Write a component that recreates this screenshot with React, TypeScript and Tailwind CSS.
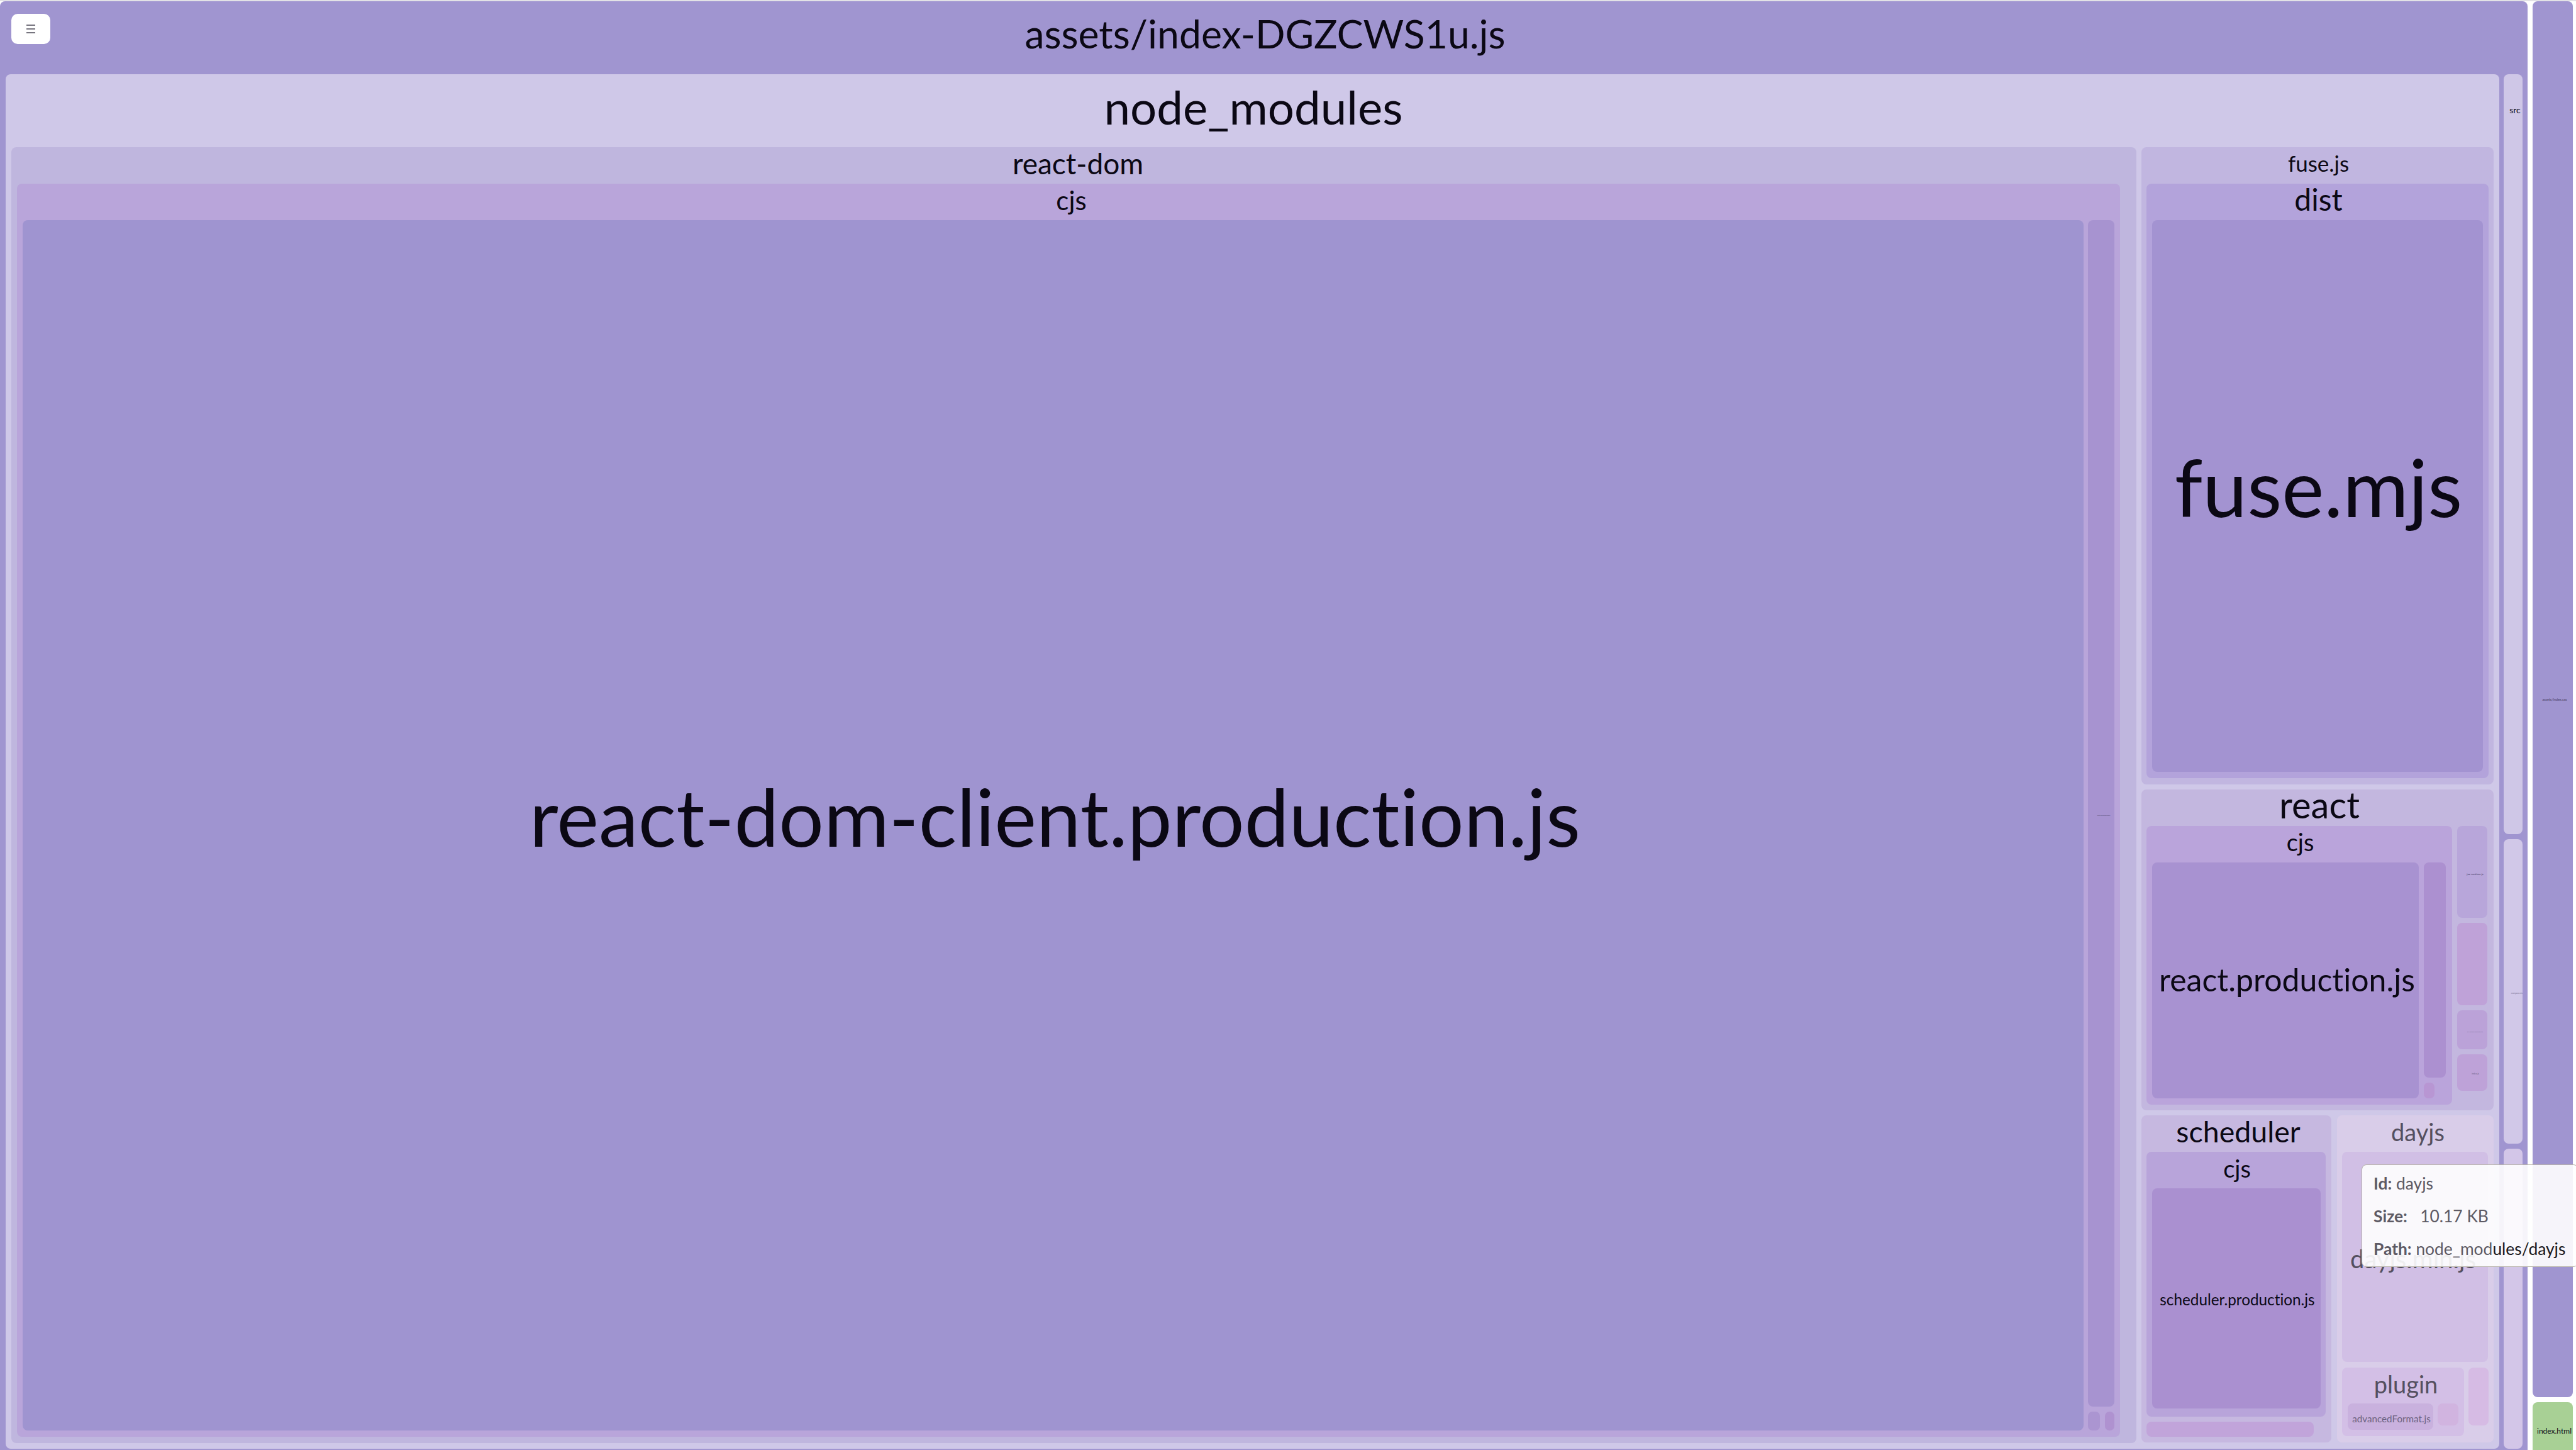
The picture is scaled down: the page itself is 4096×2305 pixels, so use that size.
const font = "font-['Lato','Liberation_Sans',sans-serif] [font-variant-ligatures:none]";

function Label({ size, children }: { size: string; children: React.ReactNode }) {
  return <span className={`whitespace-nowrap leading-none ${size}`}>{children}</span>;
}

export default function App() {
  return (
    <div className={`relative flex h-[2305px] w-[4096px] overflow-hidden border-t-2 border-[#e3e3e6] bg-white text-[#0b0814] ${font}`}>
      {/* asset: index chunk */}
      <div className="flex h-[2330px] w-[4019px] shrink-0 flex-col rounded-[8px] bg-[#a095d0]">
        <div className="relative flex h-[116px] shrink-0 items-center justify-center pb-[13px] pl-[4px]">
          <button className="absolute left-[18px] top-[20px] flex h-[48px] w-[62px] flex-col items-center justify-center gap-[4px] rounded-[10px] bg-white">
            <span className="h-[2px] w-[14px] bg-[#77757f]" />
            <span className="h-[2px] w-[14px] bg-[#77757f]" />
            <span className="h-[2px] w-[14px] bg-[#77757f]" />
          </button>
          <Label size="text-[62.5px]">assets/index-DGZCWS1u.js</Label>
        </div>

        <div className="flex h-[2185px] shrink-0 gap-[7px] pl-[9px]">
          {/* node_modules */}
          <div className="flex w-[3965px] shrink-0 flex-col rounded-[8px] bg-[#cfc8e8] px-[9px] pb-[9px]">
            <div className="flex h-[116px] shrink-0 items-center justify-center pb-[13px] pl-[3px]">
              <Label size="text-[74.5px]">node_modules</Label>
            </div>
            <div className="flex min-h-0 flex-1 gap-[8px]">
              {/* react-dom */}
              <div className="flex w-[3379px] shrink-0 flex-col rounded-[8px] bg-[#bfb6de] pl-[9px] pb-[10px]">
                <div className="flex h-[58px] shrink-0 items-center justify-center pb-[7px] pl-[4px]">
                  <Label size="text-[46px]">react-dom</Label>
                </div>
                <div className="flex min-h-0 w-[3344px] flex-1 flex-col rounded-[8px] bg-[#b9a5da] pl-[9px] pb-[10px]">
                  <div className="flex h-[58px] shrink-0 items-center justify-center pb-[6px]">
                    <Label size="text-[42px]">cjs</Label>
                  </div>
                  <div className="flex min-h-0 flex-1 gap-[7px]">
                    <div className="flex w-[3277px] shrink-0 items-center justify-center rounded-[8px] bg-[#9f94d0] pb-[30px] pl-[6px]">
                      <Label size="text-[126.4px]">react-dom-client.production.js</Label>
                    </div>
                    <div className="flex w-[42px] shrink-0 flex-col gap-[8px]">
                      <div className="flex min-h-0 flex-1 items-center justify-center rounded-[8px] bg-[#a793d0] pl-[8px] pt-[6px]">
                        <Label size="text-[2px] text-[#4b4468]">react-dom.production.js</Label>
                      </div>
                      <div className="flex h-[30px] shrink-0 gap-[8px]">
                        <div className="w-[19px] rounded-[7px] bg-[#ab95d1]" />
                        <div className="w-[15px] rounded-[7px] bg-[#af92d0]" />
                      </div>
                    </div>
                  </div>
                </div>
              </div>

              <div className="flex w-[560px] shrink-0 flex-col gap-[8px]">
                {/* fuse.js */}
                <div className="flex h-[1013px] shrink-0 flex-col rounded-[8px] bg-[#c1b6e0] px-[8px] pb-[10px]">
                  <div className="flex h-[58px] shrink-0 items-center justify-center pb-[7px] pl-[3px]">
                    <Label size="text-[35px]">fuse.js</Label>
                  </div>
                  <div className="flex min-h-0 flex-1 flex-col rounded-[8px] bg-[#b3a3db] px-[9px] pb-[10px]">
                    <div className="flex h-[58px] shrink-0 items-center justify-center pb-[8px] pl-[3px]">
                      <Label size="text-[48px]">dist</Label>
                    </div>
                    <div className="flex min-h-0 flex-1 items-center justify-center rounded-[8px] bg-[#a393d1] pb-[30px] pl-[3px]">
                      <Label size="text-[127px]">fuse.mjs</Label>
                    </div>
                  </div>
                </div>

                {/* react */}
                <div className="flex h-[510px] shrink-0 flex-col rounded-[8px] bg-[#c3b7df] px-[8px]">
                  <div className="flex h-[58px] shrink-0 items-center justify-center pb-[11px] pl-[6px]">
                    <Label size="text-[58px]">react</Label>
                  </div>
                  <div className="flex gap-[8px]">
                    <div className="flex h-[443px] w-[486px] shrink-0 flex-col rounded-[8px] bg-[#baa4db]">
                      <div className="flex h-[58px] shrink-0 items-center justify-center pb-[8px] pl-[3px]">
                        <Label size="text-[38px]">cjs</Label>
                      </div>
                      <div className="flex gap-[8px] pl-[9px]">
                        <div className="flex h-[375px] w-[424px] shrink-0 items-center justify-center rounded-[8px] bg-[#a892d1] pb-[3px] pl-[5px]">
                          <Label size="text-[50px]">react.production.js</Label>
                        </div>
                        <div className="flex w-[35px] shrink-0 flex-col gap-[8px]">
                          <div className="h-[342px] rounded-[8px] bg-[#ac90d0]" />
                          <div className="h-[25px] w-[17px] rounded-[7px] bg-[#b896d3]" />
                        </div>
                      </div>
                    </div>
                    <div className="flex w-[48px] shrink-0 flex-col gap-[8px]">
                      <div className="flex h-[146px] items-center justify-center rounded-[8px] bg-[#b8a6da] pl-[9px] pt-[8px]">
                        <Label size="text-[4.5px] text-[#3f3860]">jsx-runtime.js</Label>
                      </div>
                      <div className="h-[131px] rounded-[8px] bg-[#bfa2d8]" />
                      <div className="flex h-[62px] items-center justify-center rounded-[8px] bg-[#bba2d8] pl-[9px] pt-[6px]">
                        <Label size="text-[2.3px] text-[#6c6488]">jsx-runtime.production.js</Label>
                      </div>
                      <div className="flex h-[58px] items-center justify-center rounded-[8px] bg-[#bea2d8] pl-[10px] pt-[6px]">
                        <Label size="text-[3.5px] text-[#6c6488]">index.js</Label>
                      </div>
                    </div>
                  </div>
                </div>

                <div className="flex h-[520px] shrink-0 gap-[9px]">
                  {/* scheduler */}
                  <div className="flex w-[302px] shrink-0 flex-col rounded-[8px] bg-[#c6b8e0] px-[8px]">
                    <div className="flex h-[58px] shrink-0 items-center justify-center pb-[8px] pl-[6px]">
                      <Label size="text-[46.5px]">scheduler</Label>
                    </div>
                    <div className="flex h-[421px] w-[285px] shrink-0 flex-col rounded-[8px] bg-[#b8a4da] px-[9px]">
                      <div className="flex h-[58px] shrink-0 items-center justify-center pb-[6px] pl-[3px]">
                        <Label size="text-[38px]">cjs</Label>
                      </div>
                      <div className="flex h-[350px] w-[268px] shrink-0 items-center justify-center rounded-[8px] bg-[#aa90d0] pl-[3px] pt-[5px]">
                        <Label size="text-[24.3px]">scheduler.production.js</Label>
                      </div>
                    </div>
                    <div className="mt-[8px] h-[24px] w-[266px] rounded-[8px] bg-[#c1a4da]" />
                  </div>

                  {/* dayjs, hovered */}
                  <div className="flex w-[249px] shrink-0 flex-col rounded-[8px] bg-[#d9cde9] pl-[8px] text-[#55505f]">
                    <div className="flex h-[58px] shrink-0 items-center justify-center pb-[6px]">
                      <Label size="text-[38px]">dayjs</Label>
                    </div>
                    <div className="flex h-[334px] w-[232px] shrink-0 items-center justify-center rounded-[8px] bg-[#d1bfe5] pr-[6px] pt-[5px]">
                      <Label size="text-[40px]">dayjs.min.js</Label>
                    </div>
                    <div className="mt-[9px] flex h-[109px] shrink-0 gap-[7px]">
                      <div className="flex w-[194px] shrink-0 flex-col rounded-[8px] bg-[#d3bfe6] pl-[9px]">
                        <div className="flex h-[57px] shrink-0 items-center justify-center pb-[5px]">
                          <Label size="text-[38px]">plugin</Label>
                        </div>
                        <div className="flex gap-[7px]">
                          <div className="flex h-[42px] w-[136px] shrink-0 items-center justify-center rounded-[8px] bg-[#c9b1de] pt-[8px] pl-[3px]">
                            <Label size="text-[15.2px] text-[#6d6482]">advancedFormat.js</Label>
                          </div>
                          <div className="h-[35px] w-[33px] rounded-[8px] bg-[#d1b4e0]" />
                        </div>
                      </div>
                      <div className="h-[92px] w-[32px] rounded-[8px] bg-[#d6bbe4]" />
                    </div>
                  </div>
                </div>
              </div>
            </div>
          </div>

          {/* src */}
          <div className="flex w-[30px] shrink-0 flex-col gap-[8px]">
            <div className="flex h-[1208px] shrink-0 justify-center rounded-[8px] bg-[#cfc7e7] pl-[6px] pt-[50px]">
              <Label size="text-[14px]">src</Label>
            </div>
            <div className="flex h-[484px] shrink-0 items-center justify-center rounded-[8px] bg-[#d1c8e8] pl-[12px] pt-[8px]">
              <Label size="text-[3.4px] text-[#77708f]">components</Label>
            </div>
            <div className="min-h-0 flex-1 rounded-[8px] bg-[#d3c6e8]" />
          </div>
        </div>
      </div>

      {/* second asset column */}
      <div className="ml-[8px] flex w-[64px] shrink-0 flex-col gap-[8px]">
        <div className="flex h-[2219px] shrink-0 items-center justify-center rounded-[8px] bg-[#a095d0] pl-[6px] pt-[2px]">
          <Label size="text-[5.5px] text-[#4b4468]">assets/index.css</Label>
        </div>
        <div className="flex h-[100px] shrink-0 justify-center rounded-[8px] bg-[#a8d095] pl-[5px] pt-[40px]">
          <Label size="text-[12px]">index.html</Label>
        </div>
      </div>

      {/* hover tooltip */}
      <div className="absolute left-[3755px] top-[1849px] flex h-[163px] w-[345px] flex-col justify-center gap-[24px] rounded-[8px] border border-[#b8b4aa] bg-white/90 pl-[18px] text-[26.4px] leading-[28px] text-[#5d5a64]">
        <div><b className="font-bold">Id:</b> dayjs</div>
        <div><b className="font-bold">Size:</b>&nbsp;&nbsp; 10.17 KB</div>
        <div className="whitespace-nowrap"><b className="font-bold">Path:</b> node_mod<span className="text-[#1a1820]">ules/dayjs</span></div>
      </div>
    </div>
  );
}
